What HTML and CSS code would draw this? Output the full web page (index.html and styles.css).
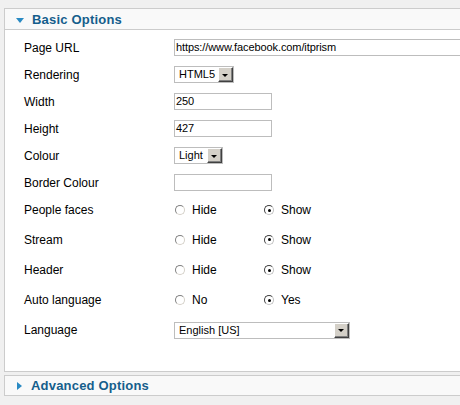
FILE: index.html
```html
<!DOCTYPE html>
<html>
<head>
<meta charset="utf-8">
<link rel="stylesheet" href="styles.css">
</head>
<body>
<div class="panel">
  <div class="panel-head"><span class="tri-down"></span><span class="title">Basic Options</span></div>
  <div class="panel-body">
    <div class="row"><div class="label">Page URL</div><div class="field grow"><span class="input wide">https://www.facebook.com/itprism</span></div></div>
    <div class="row"><div class="label">Rendering</div><div class="field"><span class="select sel-render"><span class="sel-text">HTML5</span><span class="sel-btn"><span class="arrow"></span></span></span></div></div>
    <div class="row"><div class="label">Width</div><div class="field"><span class="input">250</span></div></div>
    <div class="row"><div class="label">Height</div><div class="field"><span class="input">427</span></div></div>
    <div class="row"><div class="label">Colour</div><div class="field"><span class="select sel-colour"><span class="sel-text">Light</span><span class="sel-btn"><span class="arrow"></span></span></span></div></div>
    <div class="row"><div class="label">Border Colour</div><div class="field"><span class="input"></span></div></div>
    <div class="row r7"><div class="label">People faces</div><div class="field"><span class="opt"><span class="radio"></span>Hide</span><span class="opt"><span class="radio on"></span>Show</span></div></div>
    <div class="row r8"><div class="label">Stream</div><div class="field"><span class="opt"><span class="radio"></span>Hide</span><span class="opt"><span class="radio on"></span>Show</span></div></div>
    <div class="row tall"><div class="label">Header</div><div class="field"><span class="opt"><span class="radio"></span>Hide</span><span class="opt"><span class="radio on"></span>Show</span></div></div>
    <div class="row tall"><div class="label">Auto language</div><div class="field"><span class="opt"><span class="radio"></span>No</span><span class="opt"><span class="radio on"></span>Yes</span></div></div>
    <div class="row tall"><div class="label">Language</div><div class="field"><span class="select sel-lang"><span class="sel-text">English [US]</span><span class="sel-btn"><span class="arrow"></span></span></span></div></div>
  </div>
</div>
<div class="panel closed">
  <div class="panel-head"><span class="tri-right"></span><span class="title">Advanced Options</span></div>
</div>
</body>
</html>
```
FILE: styles.css
```css
html, body {
  margin: 0;
  padding: 0;
  background: #f0f0f0;
  overflow: hidden;
  font-family: "Liberation Sans", Arial, sans-serif;
  font-size: 12px;
  color: #000;
}
body {
  box-sizing: border-box;
  padding-top: 8px;
  width: 460px;
  height: 405px;
}
.panel {
  margin-left: 4px;
  border: 1px solid #cccccc;
  border-right: none;
  background: #fff;
}
.panel.closed {
  margin-top: 3px;
}
.panel-head {
  height: 20px;
  background: #f9f9f9;
  border-bottom: 1px solid #cccccc;
  display: flex;
  align-items: center;
}
.panel.closed .panel-head {
  height: 19px;
  border-bottom: none;
}
.title {
  font-weight: bold;
  font-size: 13px;
  color: #155e8c;
  letter-spacing: 0.2px;
}
.tri-down {
  width: 0;
  height: 0;
  border-left: 4px solid transparent;
  border-right: 4px solid transparent;
  border-top: 5px solid #2a8ac3;
  margin: 2px 8px 0 11px;
}
.tri-right {
  width: 0;
  height: 0;
  border-top: 4px solid transparent;
  border-bottom: 4px solid transparent;
  border-left: 5px solid #2a8ac3;
  margin: 0 9px 0 12px;
}
.panel-body {
  padding: 4px 0 26px 0;
}
.row {
  display: flex;
  align-items: center;
  height: 27px;
}
.row.r7 {
  height: 28px;
}
.row.r8 {
  height: 31px;
}
.row.tall {
  height: 30px;
}
.label {
  flex: none;
  width: 150px;
  padding-left: 19px;
}
.field {
  display: flex;
  align-items: center;
  min-width: 0;
}
.field.grow {
  flex: 1;
  overflow: hidden;
}
.input {
  display: block;
  box-sizing: border-box;
  flex: none;
  width: 98px;
  height: 17px;
  border: 1px solid #bdbdbd;
  font-family: "Liberation Sans", Arial, sans-serif;
  font-size: 11px;
  line-height: 15px;
  padding-left: 1px;
  letter-spacing: -0.1px;
  background: #fff;
  white-space: nowrap;
  overflow: hidden;
}
.input.wide {
  width: 300px;
}
.select {
  display: flex;
  box-sizing: border-box;
  height: 17px;
  border: 1px solid #bdbdbd;
  background: #fff;
  font-family: "Liberation Sans", Arial, sans-serif;
  font-size: 11px;
}
.sel-render { width: 60px; }
.sel-colour { width: 49px; }
.sel-lang { width: 176px; }
.sel-text {
  flex: 1;
  line-height: 15px;
  padding-left: 4px;
  white-space: nowrap;
}
.sel-btn {
  box-sizing: border-box;
  width: 15px;
  height: 15px;
  background: #d4d0c8;
  border-top: 1px solid #fff;
  border-left: 1px solid #fff;
  border-right: 1px solid #404040;
  border-bottom: 1px solid #404040;
  box-shadow: inset -1px -1px 0 #808080;
  display: flex;
  align-items: center;
  justify-content: center;
}
.arrow {
  width: 0;
  height: 0;
  border-left: 3px solid transparent;
  border-right: 3px solid transparent;
  border-top: 3px solid #000;
  margin: 1px 1px 0 0;
}
.opt {
  display: flex;
  align-items: center;
  width: 89px;
}
.radio {
  box-sizing: border-box;
  width: 10px;
  height: 10px;
  border-radius: 50%;
  border: 1px solid #808080;
  border-right-color: #d4d0c8;
  border-bottom-color: #d4d0c8;
  background: #fff;
  margin: 0 7px 0 1px;
  position: relative;
}
.radio.on {
  border-color: #404040;
  border-right-color: #c0c0c0;
  border-bottom-color: #c0c0c0;
}
.radio.on::after {
  content: "";
  position: absolute;
  left: 2.5px;
  top: 2.5px;
  width: 3px;
  height: 3px;
  border-radius: 50%;
  background: #000;
}
```
